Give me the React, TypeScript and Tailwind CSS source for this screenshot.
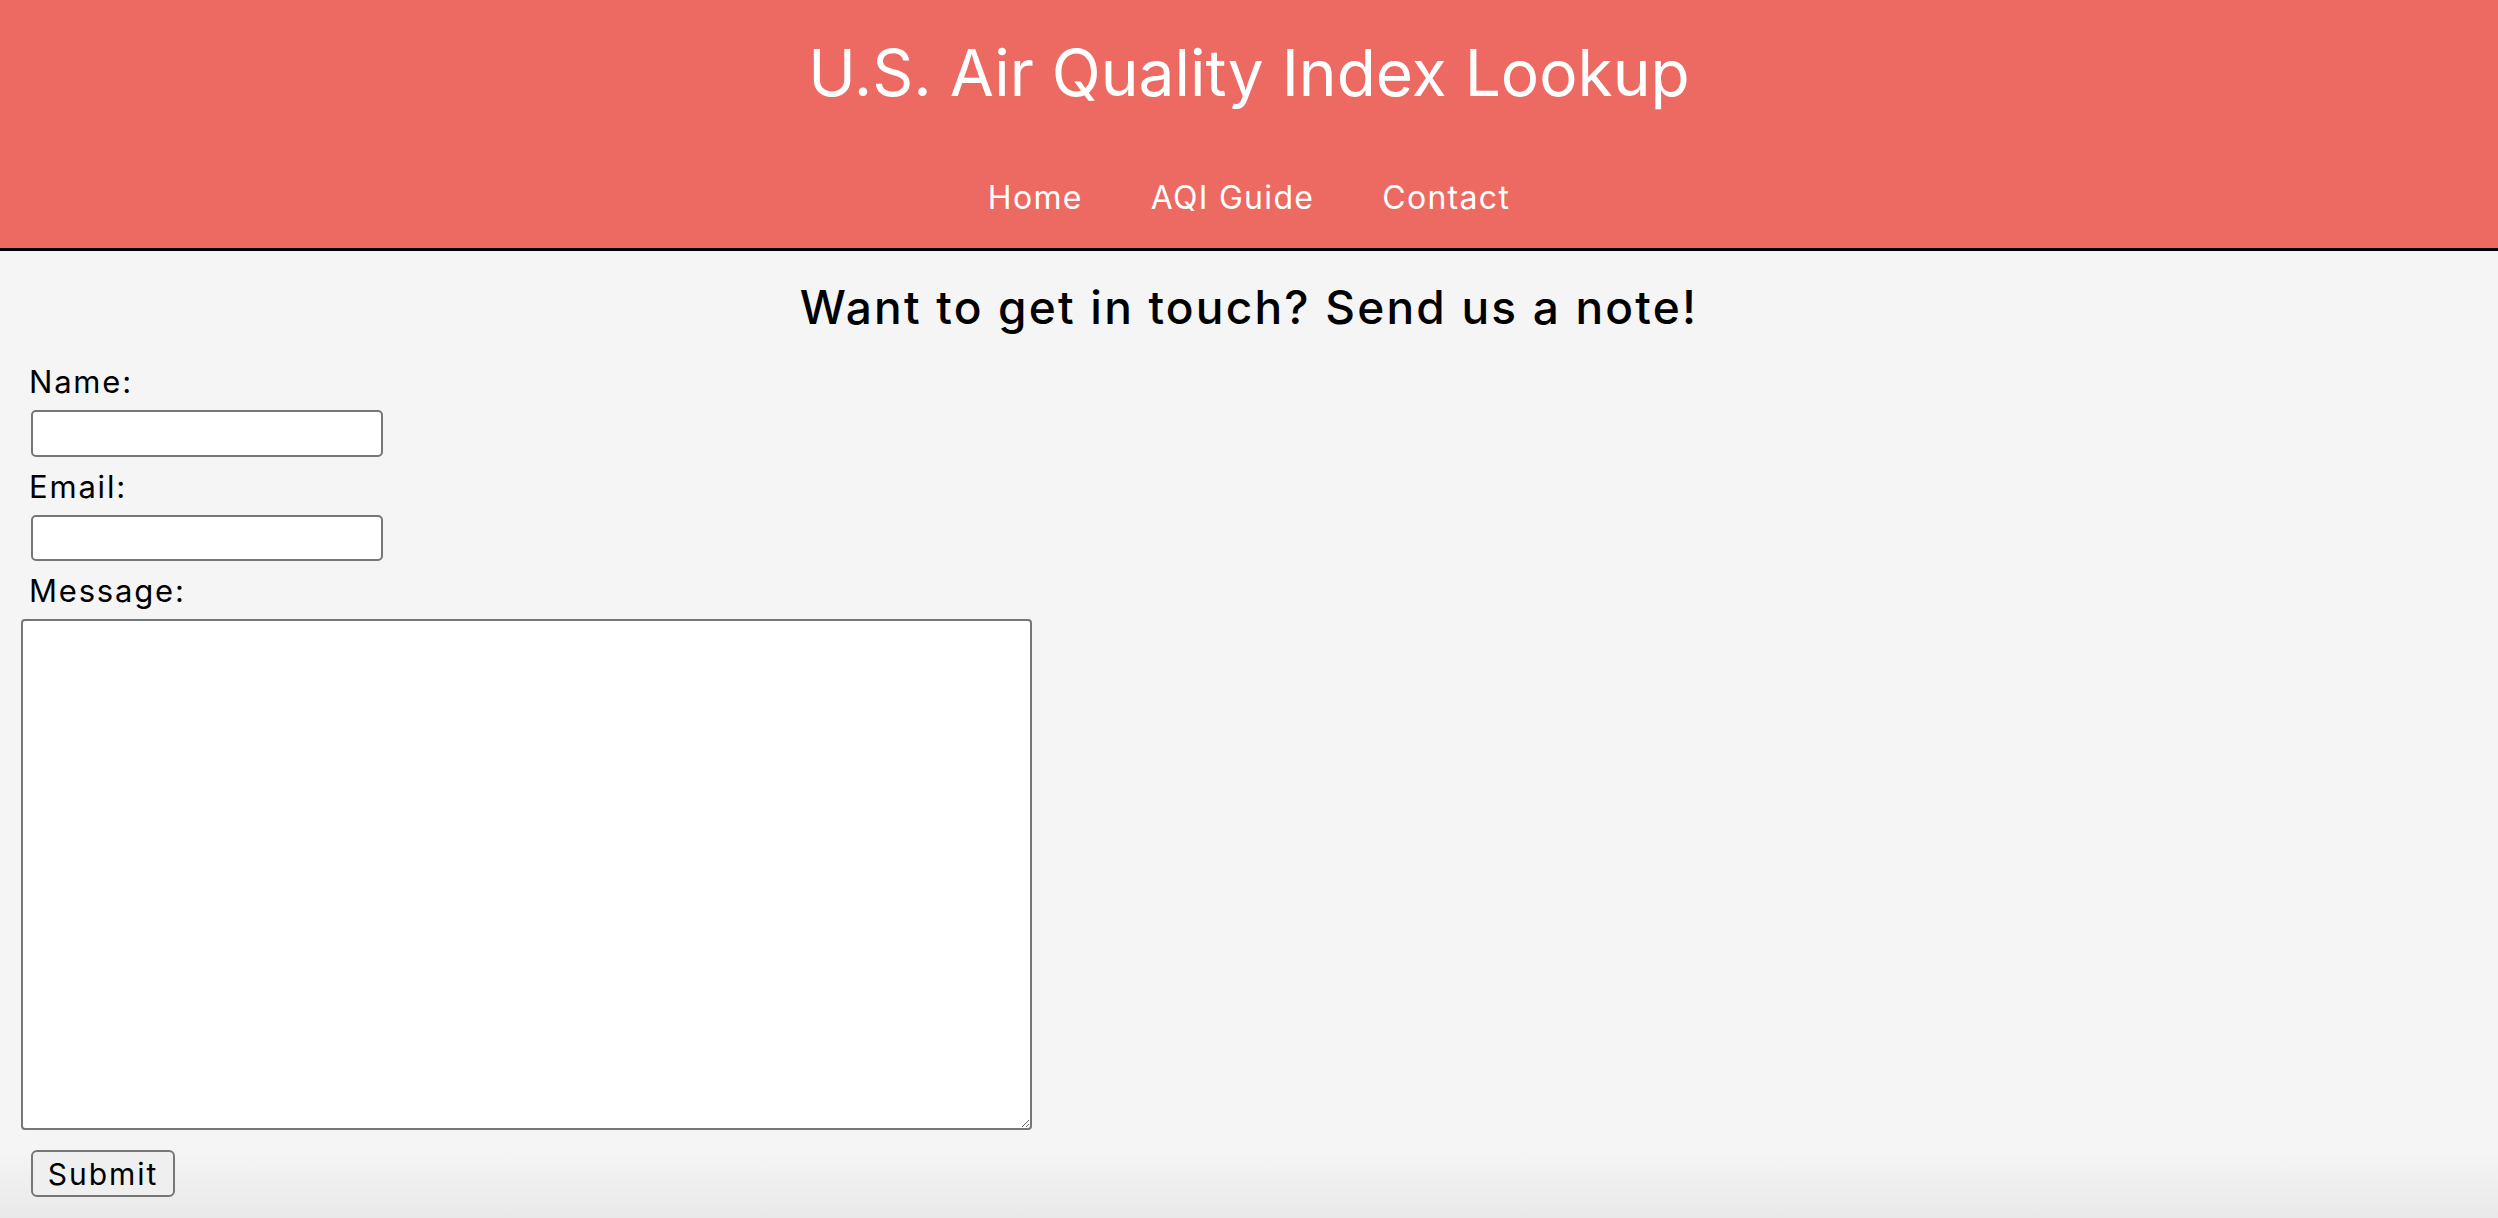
import { useState } from 'react';

const font = { fontFamily: 'Inter, "Noto Sans", sans-serif' };

export default function App() {
  const [name, setName] = useState('');
  const [email, setEmail] = useState('');
  const [message, setMessage] = useState('');

  return (
    <div style={font} className="min-h-screen flex flex-col bg-[linear-gradient(to_bottom,#f5f5f5_0%,#f5f5f5_calc(100%-70px),#e9e9e9_100%)] text-black">
      <header className="bg-[#ec6a62] border-b-[3px] border-black pt-[41px] pb-[34px] text-white">
        <h1 className="text-center text-[64px] leading-none font-normal">U.S. Air Quality Index Lookup</h1>
        <nav className="mt-[77px] flex justify-center gap-[68px] text-[32px] leading-none tracking-[1.3px]">
          <a href="#" className="text-white">Home</a>
          <a href="#" className="text-white">AQI Guide</a>
          <a href="#" className="text-white">Contact</a>
        </nav>
      </header>

      <main className="flex flex-col">
        <h2 className="mt-[33px] text-center text-[46px] leading-none font-medium tracking-[2.2px]">Want to get in touch? Send us a note!</h2>

        <form onSubmit={(e) => e.preventDefault()} className="mt-[36px] flex flex-col items-start pl-[21px]">
          <label htmlFor="name" className="ml-[8px] text-[31px] leading-none tracking-[1.8px]">Name:</label>
          <input id="name" value={name} onChange={(e) => setName(e.target.value)} className="ml-[10px] mt-[13px] w-[352px] h-[47px] bg-white border-2 border-[#767676] rounded-[5px] px-2 text-[26px] outline-none" />
          <label htmlFor="email" className="ml-[8px] mt-[14px] text-[31px] leading-none tracking-[1.8px]">Email:</label>
          <input id="email" value={email} onChange={(e) => setEmail(e.target.value)} className="ml-[10px] mt-[13px] w-[352px] h-[46px] bg-white border-2 border-[#767676] rounded-[5px] px-2 text-[26px] outline-none" />
          <label htmlFor="message" className="ml-[8px] mt-[14px] text-[31px] leading-none tracking-[1.8px]">Message:</label>
          <textarea id="message" value={message} onChange={(e) => setMessage(e.target.value)} className="mt-[13px] w-[1011px] h-[511px] bg-white border-2 border-[#767676] rounded-[4px] p-2 text-[26px] outline-none" />
          <button type="submit" className="ml-[10px] mt-[20px] w-[144px] h-[47px] bg-[#efefef] border-2 border-[#767676] rounded-[6px] text-[30px] leading-none tracking-[2px]">Submit</button>
        </form>
      </main>
    </div>
  );
}
